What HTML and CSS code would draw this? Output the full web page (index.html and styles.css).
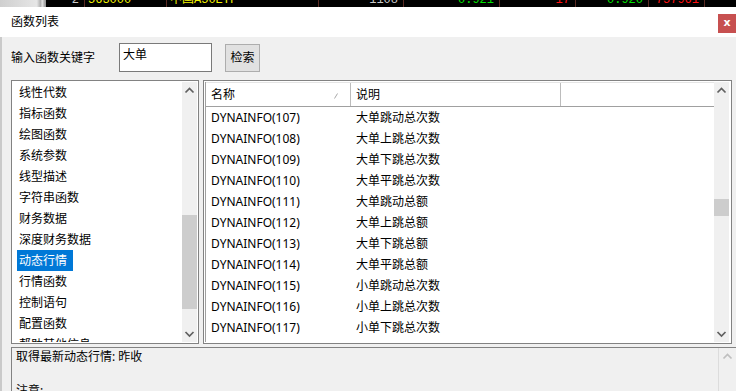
FILE: index.html
```html
<!DOCTYPE html>
<html lang="zh-CN">
<head>
<meta charset="utf-8">
<title>函数列表</title>
<link rel="stylesheet" href="styles.css">
</head>
<body>
<div class="ticker">
  <div class="tk-frame"></div>
  <div class="tk-cell w1 gray">2</div>
  <div class="tk-cell w2 yellow left">563000</div>
  <div class="tk-cell w3 yellow left">中国A50ETF</div>
  <div class="tk-cell w4 gray">1108</div>
  <div class="tk-cell w5 green">0.921</div>
  <div class="tk-cell w6 red">17</div>
  <div class="tk-cell w7 green">0.920</div>
  <div class="tk-cell w8 red">757961</div>
  <div class="tk-cell w9"></div>
</div>
<div class="dialog">
  <div class="titlebar">
    <span class="title">函数列表</span>
    <div class="close">x</div>
  </div>
  <div class="panel">
    <div class="search">
      <span class="label">输入函数关键字</span>
      <div class="input">大单</div>
      <div class="btn">检索</div>
    </div>
    <div class="lists">
      <div class="cats">
        <ul class="cat-items">
          <li><span>线性代数</span></li>
          <li><span>指标函数</span></li>
          <li><span>绘图函数</span></li>
          <li><span>系统参数</span></li>
          <li><span>线型描述</span></li>
          <li><span>字符串函数</span></li>
          <li><span>财务数据</span></li>
          <li><span>深度财务数据</span></li>
          <li class="sel"><span>动态行情</span></li>
          <li><span>行情函数</span></li>
          <li><span>控制语句</span></li>
          <li><span>配置函数</span></li>
          <li><span>帮助其他信息</span></li>
        </ul>
        <div class="sb sb-cats">
          <div class="sb-btn"><svg viewBox="0 0 15 17" width="15" height="17"><polyline points="3.5,10.5 7.5,6.5 11.5,10.5" /></svg></div>
          <div class="sb-track"><div class="sb-thumb thumb-cats"></div></div>
          <div class="sb-btn"><svg viewBox="0 0 15 17" width="15" height="17"><polyline points="3.5,7 7.5,11 11.5,7" /></svg></div>
        </div>
      </div>
      <div class="funcs">
        <div class="table">
          <div class="thead">
            <div class="th c1"><span>名称</span><svg class="sort" viewBox="0 0 4 6" width="4" height="6"><line x1="0.5" y1="5.5" x2="3.5" y2="0.5" /></svg></div>
            <div class="th c2"><span>说明</span></div>
            <div class="th c3"></div>
          </div>
          <div class="rows">
            <div class="row"><span class="c1">DYNAINFO(107)</span><span class="c2">大单跳动总次数</span></div>
            <div class="row"><span class="c1">DYNAINFO(108)</span><span class="c2">大单上跳总次数</span></div>
            <div class="row"><span class="c1">DYNAINFO(109)</span><span class="c2">大单下跳总次数</span></div>
            <div class="row"><span class="c1">DYNAINFO(110)</span><span class="c2">大单平跳总次数</span></div>
            <div class="row"><span class="c1">DYNAINFO(111)</span><span class="c2">大单跳动总额</span></div>
            <div class="row"><span class="c1">DYNAINFO(112)</span><span class="c2">大单上跳总额</span></div>
            <div class="row"><span class="c1">DYNAINFO(113)</span><span class="c2">大单下跳总额</span></div>
            <div class="row"><span class="c1">DYNAINFO(114)</span><span class="c2">大单平跳总额</span></div>
            <div class="row"><span class="c1">DYNAINFO(115)</span><span class="c2">小单跳动总次数</span></div>
            <div class="row"><span class="c1">DYNAINFO(116)</span><span class="c2">小单上跳总次数</span></div>
            <div class="row"><span class="c1">DYNAINFO(117)</span><span class="c2">小单下跳总次数</span></div>
          </div>
        </div>
        <div class="sb sb-funcs">
          <div class="sb-btn"><svg viewBox="0 0 15 17" width="15" height="17"><polyline points="3.5,10.5 7.5,6.5 11.5,10.5" /></svg></div>
          <div class="sb-track"><div class="sb-thumb thumb-funcs"></div></div>
          <div class="sb-btn"><svg viewBox="0 0 15 17" width="15" height="17"><polyline points="3.5,7 7.5,11 11.5,7" /></svg></div>
        </div>
      </div>
    </div>
    <div class="desc">
      <div class="desc-text">
        <p>取得最新动态行情: 昨收</p>
        <p>&nbsp;</p>
        <p>注意:</p>
      </div>
      <div class="sb sb-desc">
        <div class="sb-btn"><svg viewBox="0 0 17 17" width="17" height="17"><polyline points="4.5,10.5 8.5,6.5 12.5,10.5" /></svg></div>
      </div>
    </div>
  </div>
</div>
</body>
</html>
```

FILE: styles.css
```css
html, body {
  margin: 0;
  padding: 0;
}
body {
  width: 736px;
  height: 391px;
  overflow: hidden;
  background: #f0f0f0;
  font-family: "Noto Sans", "Noto Sans CJK SC", sans-serif;
  font-size: 12px;
  color: #000;
}

/* ticker strip behind the dialog */
.ticker {
  height: 7px;
  display: flex;
  overflow: hidden;
  background: #000;
  font-family: "Liberation Mono", "Noto Sans CJK SC", monospace;
  font-size: 12px;
}
.tk-frame {
  width: 46px;
  flex: none;
  background: linear-gradient(to right, #cfcfcf, #e6e6e6 80%, #b0b0b0 88%, #e0e0e0 92%, #9a9a9a 98%);
}
.tk-cell {
  flex: none;
  height: 16px;
  line-height: 14px;
  margin-top: -7px;
  text-align: right;
  padding-right: 5px;
  box-sizing: border-box;
  border-right: 1px solid #5a2a22;
  white-space: nowrap;
}
.tk-cell.left { text-align: left; padding-left: 3px; }
.w1 { width: 39px; }
.w2 { width: 82px; }
.w3 { width: 152px; }
.w4 { width: 85px; }
.w5 { width: 96px; }
.w6 { width: 76px; }
.w7 { width: 73px; }
.w8 { width: 56px; }
.w9 { width: 31px; border-right: 0; }
.gray { color: #c8c8c8; }
.yellow { color: #f0f000; }
.green { color: #00e000; }
.red { color: #ff1010; }

/* dialog */
.titlebar {
  height: 30px;
  background: #fff;
  display: flex;
  justify-content: space-between;
  align-items: flex-start;
}
.title {
  padding-left: 11px;
  line-height: 30px;
}
.close {
  margin-top: 7px;
  width: 18px;
  height: 19px;
  background: #c75050;
  color: #fff;
  font-family: "DejaVu Sans", sans-serif;
  font-weight: bold;
  font-size: 11px;
  line-height: 18px;
  text-align: center;
}

.panel {
  height: 354px;
  background: #f0f0f0;
  border-left: 2px solid #cacaca;
  padding: 6px 0 0 9px;
  box-sizing: border-box;
}

.search {
  display: flex;
  align-items: flex-start;
  height: 29px;
}
.label {
  width: 108px;
  line-height: 29px;
}
.input {
  width: 93px;
  height: 29px;
  box-sizing: border-box;
  border: 1px solid #7a7a7a;
  background: #fff;
  padding: 2px 3px;
  line-height: 17px;
}
.btn {
  margin-left: 13px;
  margin-top: 1px;
  width: 35px;
  height: 28px;
  box-sizing: border-box;
  border: 1px solid #adadad;
  background: #e1e1e1;
  text-align: center;
  line-height: 26px;
}

.lists {
  margin-top: 8px;
  height: 264px;
  display: flex;
  gap: 4px;
}

.cats {
  width: 188px;
  height: 264px;
  box-sizing: border-box;
  border: 1px solid #828282;
  padding: 1px;
  background: #fff;
  display: flex;
}
.cat-items {
  list-style: none;
  margin: 0;
  padding: 0 0 0 4px;
  flex: 1;
  overflow: hidden;
}
.cat-items li {
  height: 21px;
  line-height: 21px;
  white-space: nowrap;
}
.cat-items li span {
  display: inline-block;
  padding: 0 6px 0 2px;
}
.cat-items li.sel span {
  background: #0078d7;
  color: #fff;
}

/* scrollbars */
.sb {
  flex: none;
  width: 15px;
  display: flex;
  flex-direction: column;
  background: #f0f0f0;
}
.sb-btn {
  height: 17px;
  flex: none;
}
.sb-btn svg {
  display: block;
}
.sb-btn polyline {
  fill: none;
  stroke: #606060;
  stroke-width: 1.7;
}
.sb-track {
  flex: 1;
}
.sb-thumb {
  background: #cdcdcd;
}
.thumb-cats {
  margin-top: 116px;
  height: 94px;
}
.thumb-funcs {
  margin-top: 100px;
  height: 17px;
}

.funcs {
  width: 529px;
  height: 264px;
  box-sizing: border-box;
  border: 1px solid #828282;
  padding: 1px 2px 1px 1px;
  background: #fff;
  display: flex;
}
.table {
  flex: 1;
  border-left: 1px solid #a0a0a0;
  overflow: hidden;
}
.thead {
  display: flex;
  height: 23px;
  border-top: 1px solid #e5e5e5;
  border-bottom: 1px solid #a0a0a0;
}
.th {
  box-sizing: border-box;
  line-height: 23px;
  padding-left: 5px;
  border-right: 1px solid #bcbcbc;
  display: flex;
  align-items: center;
}
.th.c3 { flex: 1; border-right: 0; }
.c1 { width: 145px; flex: none; }
.c2 { width: 210px; flex: none; }
.th.c1 { justify-content: space-between; padding-right: 12px; }
.sort {
  display: block;
  margin-top: 2px;
}
.sort line {
  stroke: #a8a8a8;
  stroke-width: 1;
}
.row {
  display: flex;
  height: 21px;
  line-height: 21px;
  white-space: nowrap;
}
.row span {
  box-sizing: border-box;
  padding-left: 5px;
}

/* description */
.desc {
  margin-top: 3px;
  width: 726px;
  height: 60px;
  box-sizing: border-box;
  border: 1px solid #828282;
  border-bottom: 0;
  background: #f0f0f0;
  display: flex;
}
.desc-text {
  flex: 1;
  padding-left: 4px;
}
.desc-text p {
  margin: 0;
  line-height: 17px;
}
.sb-desc {
  width: 17px;
  border-left: 1px solid #dcdcdc;
}
.sb-desc .sb-btn polyline {
  stroke: #bfbfbf;
}
```
